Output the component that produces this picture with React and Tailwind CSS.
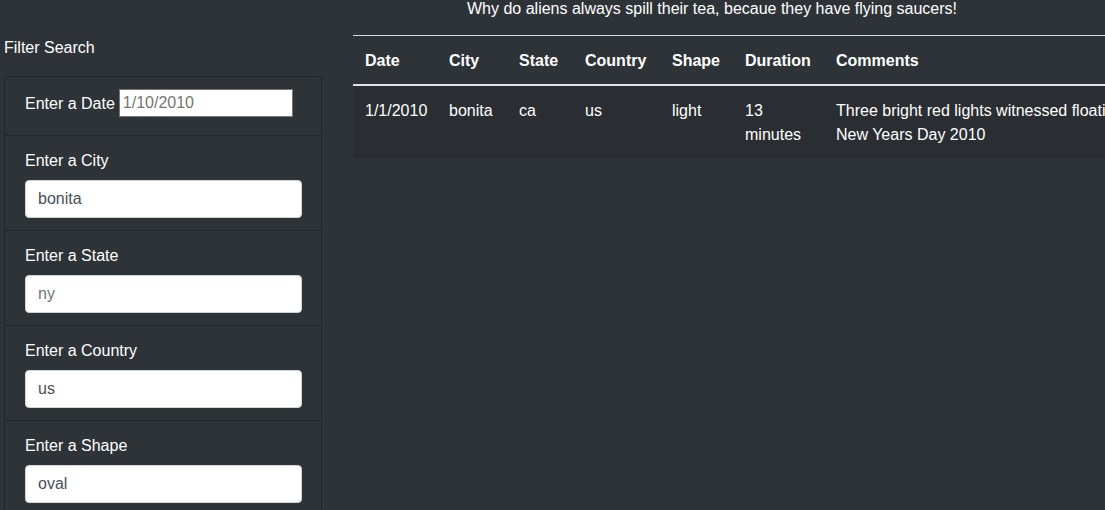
import React from 'react';

const filters = [
  { label: 'Enter a City', value: 'bonita' },
  { label: 'Enter a State', placeholder: 'ny' },
  { label: 'Enter a Country', value: 'us' },
  { label: 'Enter a Shape', value: 'oval' },
];

const columns = [
  { name: 'Date', w: 'w-[84px]' },
  { name: 'City', w: 'w-[70px]' },
  { name: 'State', w: 'w-[66px]' },
  { name: 'Country', w: 'w-[87px]' },
  { name: 'Shape', w: 'w-[73px]' },
  { name: 'Duration', w: 'w-[91px]' },
  { name: 'Comments', w: 'w-[500px]' },
];

const App = () => {
  return (
    <div className="w-[1105px] h-[510px] overflow-hidden flex bg-[#2e3338] text-white font-['Liberation_Sans',Arial,sans-serif] text-base">
      {/* Filter sidebar */}
      <div className="w-[338px] shrink-0">
        <div className="pt-[36px] pl-1 leading-6">Filter Search</div>
        <div className="mt-4 ml-[4px] w-[318px] border border-[#24282c] rounded-[4px]">
          <div className="h-[59px] flex items-start pt-3 px-5 border-b border-[#24282c]">
            <label className="leading-6 mt-[3px] mr-1">Enter a Date</label>
            <input
              className="w-[174px] h-[28px] px-[3px] bg-white border border-[#767676] text-[#757575] placeholder:text-[#757575] outline-none"
              placeholder="1/10/2010"
              readOnly
            />
          </div>
          {filters.map((f, i) => (
            <div
              key={f.label}
              className={`px-5 pt-3 pb-3 ${i < filters.length - 1 ? 'border-b border-[#24282c]' : ''}`}
            >
              <label className="block leading-6 pt-[1px] mb-[7px]">{f.label}</label>
              <input
                className="w-[277px] h-[38px] px-3 bg-white border border-[#ced4da] rounded-[4px] text-[#495057] placeholder:text-[#6c757d] outline-none"
                defaultValue={f.value}
                placeholder={f.placeholder}
                readOnly
              />
            </div>
          ))}
        </div>
      </div>

      {/* Results */}
      <div className="flex-1 min-w-0 pl-[15px]">
        <div className="text-center leading-4 pt-[1px] pr-[34px]">
          Why do aliens always spill their tea, becaue they have flying saucers!
        </div>
        <table className="mt-[18px] table-fixed border-collapse w-[971px]">
          <thead>
            <tr>
              {columns.map(c => (
                <th
                  key={c.name}
                  className={`${c.w} px-3 pt-[13px] pb-[11px] text-left font-bold leading-6 border-t border-[#d6d9dc] border-b-2 border-b-[#dee2e6]`}
                >
                  {c.name}
                </th>
              ))}
            </tr>
          </thead>
          <tbody>
            <tr className="bg-[#2a2e33] align-top">
              <td className="px-3 pt-[13px] pb-[11px] leading-6">1/1/2010</td>
              <td className="px-3 pt-[13px] pb-[11px] leading-6">bonita</td>
              <td className="px-3 pt-[13px] pb-[11px] leading-6">ca</td>
              <td className="px-3 pt-[13px] pb-[11px] leading-6">us</td>
              <td className="px-3 pt-[13px] pb-[11px] leading-6">light</td>
              <td className="px-3 pt-[13px] pb-[11px] leading-6">13 minutes</td>
              <td className="px-3 pt-[13px] pb-[11px] leading-6">
                <span className="block whitespace-nowrap">Three bright red lights witnessed floating in the sky on</span>
                <span className="block whitespace-nowrap">New Years Day 2010</span>
              </td>
            </tr>
          </tbody>
        </table>
      </div>
    </div>
  );
};

export default App;
